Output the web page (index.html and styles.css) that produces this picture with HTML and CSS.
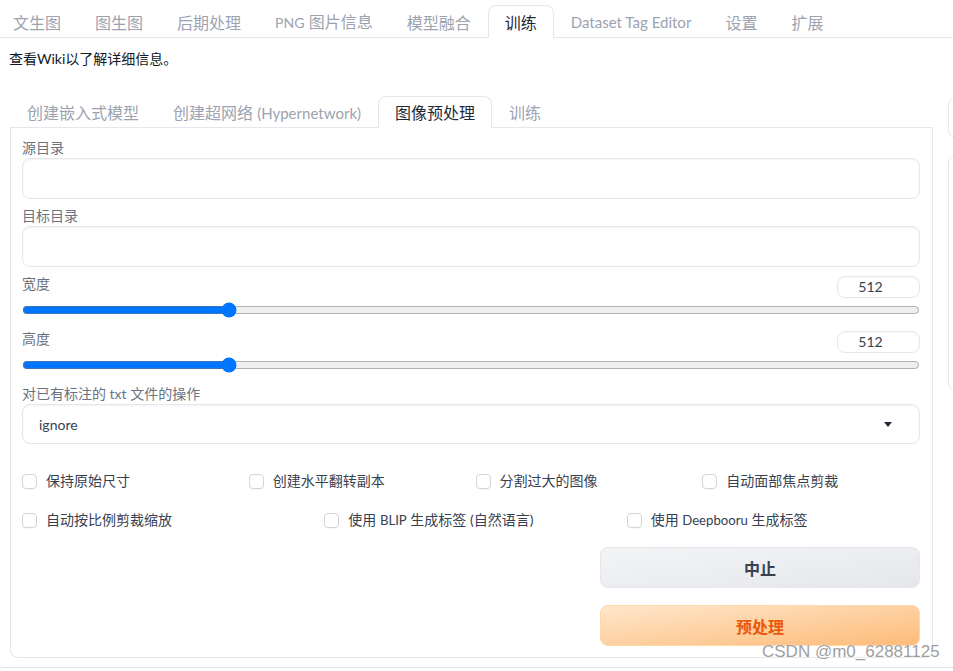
FILE: index.html
```html
<!DOCTYPE html>
<html lang="zh-CN">
<head>
<meta charset="utf-8">
<title>训练 - 图像预处理</title>
<link rel="stylesheet" href="styles.css">
</head>
<body>
<div class="app">
  <nav class="tabs top-tabs">
    <button class="tab">文生图</button>
    <button class="tab">图生图</button>
    <button class="tab">后期处理</button>
    <button class="tab"><span class="en narrow">PNG</span> 图片信息</button>
    <button class="tab">模型融合</button>
    <button class="tab active">训练</button>
    <button class="tab"><span class="en">Dataset Tag Editor</span></button>
    <button class="tab">设置</button>
    <button class="tab">扩展</button>
  </nav>
  <div class="tabitem outer">
    <p class="md">查看Wiki以了解详细信息。</p>
    <div class="main-row">
      <div class="left-col">
        <nav class="tabs sub-tabs">
          <button class="tab">创建嵌入式模型</button>
          <button class="tab">创建超网络 <span class="en">(Hypernetwork)</span></button>
          <button class="tab active">图像预处理</button>
          <button class="tab">训练</button>
        </nav>
        <div class="tabitem inner">
          <div class="field">
            <label class="lbl">源目录</label>
            <div class="textbox"></div>
          </div>
          <div class="field">
            <label class="lbl">目标目录</label>
            <div class="textbox"></div>
          </div>
          <div class="slider-field">
            <div class="slider-head">
              <label class="lbl">宽度</label>
              <div class="num">512</div>
            </div>
            <input class="range" type="range" min="64" max="2048" step="8" value="512">
          </div>
          <div class="slider-field">
            <div class="slider-head">
              <label class="lbl">高度</label>
              <div class="num">512</div>
            </div>
            <input class="range" type="range" min="64" max="2048" step="8" value="512">
          </div>
          <div class="field">
            <label class="lbl">对已有标注的 txt 文件的操作</label>
            <div class="dropdown">
              <span>ignore</span>
              <svg class="caret" width="8" height="5" viewBox="0 0 8 5"><path d="M0 0H8L4 5Z" fill="#1f2937"/></svg>
            </div>
          </div>
          <div class="checks four">
            <div class="check"><span class="cb"></span><span>保持原始尺寸</span></div>
            <div class="check"><span class="cb"></span><span>创建水平翻转副本</span></div>
            <div class="check"><span class="cb"></span><span>分割过大的图像</span></div>
            <div class="check"><span class="cb"></span><span>自动面部焦点剪裁</span></div>
          </div>
          <div class="checks three">
            <div class="check"><span class="cb"></span><span>自动按比例剪裁缩放</span></div>
            <div class="check"><span class="cb"></span><span>使用 <span class="en">BLIP</span> 生成标签 (自然语言)</span></div>
            <div class="check"><span class="cb"></span><span>使用 <span class="en">Deepbooru</span> 生成标签</span></div>
          </div>
          <div class="btn-row">
            <div class="btn-col">
              <button class="btn secondary">中止</button>
              <button class="btn primary">预处理</button>
            </div>
          </div>
        </div>
      </div>
      <div class="right-col">
        <div class="box box1"></div>
        <div class="box box2"></div>
      </div>
    </div>
  </div>
  <div class="watermark">CSDN @m0_62881125</div>
</div>
</body>
</html>
```
FILE: styles.css
```css
* { box-sizing: border-box; }
html, body {
  margin: 0;
  padding: 0;
  background: #fff;
  overflow: hidden;
  height: 671px;
}
body {
  font-family: "Lato", "Noto Sans CJK SC", sans-serif;
  color: #1f2937;
  font-size: 14px;
}
.en {
  font-size: 0.94em;
}
.en.narrow {
  font-size: 0.88em;
}
.app {
  position: relative;
  margin-left: -4px;
  width: 980px;
  height: 671px;
}
.tabs {
  display: flex;
  gap: 0;
  border-bottom: 1px solid #e5e7eb;
}
.tab {
  font-family: inherit;
  font-size: 16px;
  color: #9ca3af;
  background: transparent;
  border: 1px solid transparent;
  border-bottom: none;
  border-radius: 8px 8px 0 0;
  padding: 0 16px;
  margin: 0 0 -1px 0;
  white-space: nowrap;
  cursor: pointer;
}
.tab.active {
  color: #1f2937;
  background: #fff;
  border-color: #e5e7eb;
}
.top-tabs {
  padding-top: 5px;
}
.top-tabs .tab {
  height: 33px;
  line-height: 31px;
}
.tabitem {
  border: 1px solid #e5e7eb;
  border-top: none;
  border-radius: 0 0 8px 8px;
  background: #fff;
}
.outer {
  padding: 11px 13px 9px 13px;
}
.md {
  margin: 0 0 27px -1px;
  line-height: 20px;
  font-size: 14px;
  color: #111827;
}
.main-row {
  display: flex;
  gap: 15px;
  align-items: flex-start;
}
.left-col {
  width: 923px;
  flex: none;
}
.sub-tabs .tab {
  height: 32px;
  line-height: 30px;
  padding-top: 1px;
}
.inner {
  padding: 10px 12px 11px 11px;
  display: flex;
  flex-direction: column;
}
.lbl {
  display: block;
  line-height: 20px;
  font-size: 14px;
  color: #6b7280;
}
.field + .field,
.field + .slider-field,
.slider-field + .slider-field,
.slider-field + .field {
  margin-top: 7px;
}
.textbox {
  height: 41px;
  border: 1px solid #e5e7eb;
  border-radius: 8px;
  box-shadow: inset 0 1px 2px rgba(0,0,0,0.05);
  background: #fff;
}
.slider-field {
  padding-bottom: 4px;
}
.slider-head {
  display: flex;
  justify-content: space-between;
  align-items: flex-start;
  height: 24px;
}
.num {
  width: 83px;
  height: 22px;
  margin-top: 2px;
  border: 1px solid #e5e7eb;
  border-radius: 8px;
  font-size: 14px;
  line-height: 20px;
  text-align: center;
  padding-right: 16px;
  color: #374151;
  box-shadow: inset 0 1px 2px rgba(0,0,0,0.04);
}
.range {
  display: block;
  width: 100%;
  height: 16px;
  margin: 4px 0 0 0;
}
.dropdown {
  height: 40px;
  border: 1px solid #e5e7eb;
  border-radius: 8px;
  box-shadow: inset 0 1px 2px rgba(0,0,0,0.05);
  display: flex;
  align-items: center;
  justify-content: space-between;
  padding: 0 27px 0 16px;
  color: #374151;
  font-size: 14px;
}
.caret { display: block; }
.checks {
  display: grid;
  column-gap: 9px;
  height: 24px;
  align-items: center;
}
.checks.four {
  grid-template-columns: repeat(4, 1fr);
  margin-top: 25px;
}
.checks.three {
  grid-template-columns: repeat(3, 1fr);
  margin-top: 15px;
}
.check {
  display: flex;
  align-items: center;
  gap: 9px;
  color: #374151;
  font-size: 14px;
  line-height: 20px;
  white-space: nowrap;
}
.cb {
  width: 15px;
  height: 15px;
  flex: none;
  border: 1px solid #d1d5db;
  border-radius: 4px;
  background: #fff;
  box-shadow: 0 1px 1px rgba(0,0,0,0.03);
}
.btn-row {
  display: flex;
  justify-content: flex-end;
  margin-top: 15px;
}
.btn-col {
  width: 320px;
  display: flex;
  flex-direction: column;
  gap: 17px;
}
.btn {
  height: 41px;
  border-radius: 8px;
  font-family: inherit;
  font-size: 16px;
  font-weight: 700;
  cursor: pointer;
}
.btn.secondary {
  border: 1px solid #e5e7eb;
  background: linear-gradient(to bottom right, #f3f4f6, #e5e7eb);
  color: #374151;
}
.btn.primary {
  border: 1px solid #fed7aa;
  background: linear-gradient(to bottom right, #ffe7cc, #fdbb78);
  color: #ea580c;
}
.right-col {
  width: 300px;
  flex: none;
  padding-top: 1px;
}
.box {
  border: 1px solid #e5e7eb;
  border-radius: 8px;
  background: #fff;
}
.box1 { height: 41px; }
.box2 { height: 236px; margin-top: 17px; }
.watermark {
  position: absolute;
  left: 766px;
  top: 642px;
  font-family: "Liberation Sans", Arial, sans-serif;
  font-size: 17px;
  line-height: 20px;
  color: rgba(140,140,140,0.85);
  text-shadow: 0 0 1px #fff, 0 0 1px #fff;
  white-space: nowrap;
}
```
